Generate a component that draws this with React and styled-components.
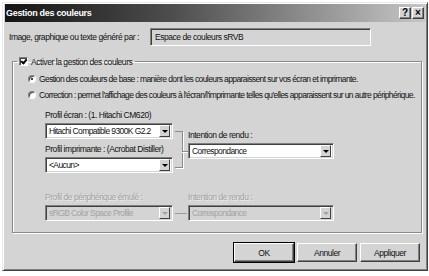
import React from "react";
import styled, { createGlobalStyle } from "styled-components";

const GlobalStyle = createGlobalStyle`
  html, body {
    margin: 0;
    padding: 0;
    background: #ffffff;
  }
  body {
    font-family: "Liberation Sans", Arial, sans-serif;
    font-size: 8.5px;
    letter-spacing: -0.45px;
    color: #111;
  }
`;

const FACE = "#d4d4d4";

const Window = styled.div`
  box-sizing: border-box;
  width: 426px;
  height: 269px;
  margin: 2px 0 0 2px;
  background: ${FACE};
  border: 1px solid;
  border-color: #e8e8e8 #404040 #404040 #e8e8e8;
  box-shadow: inset 1px 1px 0 #ffffff, inset -1px -1px 0 #808080;
  padding: 1px 2px;
  display: flex;
  flex-direction: column;
`;

const TitleBar = styled.div`
  height: 18px;
  flex: none;
  display: flex;
  align-items: center;
  justify-content: space-between;
  padding: 0 1px;
  background: linear-gradient(to right, #141414 0%, #4e4e4e 40%, #c6c6c6 100%);
  color: #ffffff;
  font-weight: bold;
  font-size: 9px;
  letter-spacing: -0.3px;
`;

const CaptionButtons = styled.div`
  display: flex;
  gap: 1px;
`;

const CaptionButton = styled.div`
  box-sizing: border-box;
  width: 12px;
  height: 12px;
  background: ${FACE};
  border: 1px solid;
  border-color: #ffffff #404040 #404040 #ffffff;
  box-shadow: inset -1px -1px 0 #808080;
  color: #000;
  font-weight: bold;
  font-size: 10px;
  line-height: 10px;
  text-align: center;
  letter-spacing: 0;
`;

const Content = styled.div`
  flex: 1;
  display: flex;
  flex-direction: column;
  padding-top: 6px;
`;

const SourceRow = styled.div`
  display: flex;
  align-items: center;
`;

const SourceLabel = styled.span`
  width: 141px;
  padding-left: 4px;
`;

const ReadOnlyField = styled.div`
  box-sizing: border-box;
  width: 221px;
  height: 18px;
  display: flex;
  align-items: center;
  padding-left: 4px;
  border: 1px solid;
  border-color: #808080 #ffffff #ffffff #808080;
  box-shadow: inset 1px 1px 0 #404040, inset -1px -1px 0 ${FACE};
`;

const Group = styled.fieldset`
  box-sizing: border-box;
  height: 177px;
  margin: 10px 6px 0 7px;
  padding: 0 6px 0 15px;
  border: 1px solid #8a8a8a;
  box-shadow: 1px 1px 0 #ffffff, inset 1px 1px 0 #ffffff;
  display: flex;
  flex-direction: column;
`;

const Legend = styled.legend`
  height: 11px;
  display: flex;
  align-items: center;
  gap: 3px;
  padding: 0 3px 0 2px;
  margin-left: -11px;
`;

const CheckBox = styled.span`
  box-sizing: border-box;
  width: 9px;
  height: 9px;
  background: #fff;
  border: 1px solid;
  border-color: #808080 #ffffff #ffffff #808080;
  box-shadow: inset 1px 1px 0 #404040;
  position: relative;
  &::after {
    content: "";
    position: absolute;
    left: 2px;
    top: 0;
    width: 2px;
    height: 4px;
    border: solid #000;
    border-width: 0 2px 2px 0;
    transform: rotate(40deg);
  }
`;

const RadioList = styled.div`
  display: flex;
  flex-direction: column;
  gap: 5px;
  margin-top: 6px;
`;

const RadioRow = styled.div`
  height: 11px;
  display: flex;
  align-items: center;
  gap: 3px;
  white-space: nowrap;
  letter-spacing: -0.6px;
`;

const Radio = styled.span`
  box-sizing: border-box;
  width: 8px;
  height: 8px;
  border-radius: 50%;
  background: #fff;
  border: 1px solid;
  border-color: #808080 #ffffff #ffffff #808080;
  box-shadow: inset 1px 1px 0 #404040;
  display: flex;
  align-items: center;
  justify-content: center;
  &::after {
    content: "";
    width: 2px;
    height: 2px;
    border-radius: 50%;
    background: ${(p) => (p.$checked ? "#000" : "transparent")};
  }
`;

const ProfileGrid = styled.div`
  display: grid;
  grid-template-columns: 128px 15px 146px;
  margin: ${(p) => p.$top}px 0 0 17px;
`;

const Column = styled.div`
  display: flex;
  flex-direction: column;
`;

const FieldLabel = styled.div`
  height: 11px;
  line-height: 11px;
  margin-bottom: 2px;
  white-space: nowrap;
  color: ${(p) => (p.$disabled ? "#a2a2a2" : "#111")};
  text-shadow: ${(p) => (p.$disabled ? "1px 1px 0 #ececec" : "none")};
`;

const SelectBox = styled.div`
  box-sizing: border-box;
  height: 16px;
  display: flex;
  align-items: center;
  background: ${(p) => (p.$disabled ? FACE : "#fff")};
  color: ${(p) => (p.$disabled ? "#a2a2a2" : "#111")};
  border: 1px solid;
  border-color: #808080 #ffffff #ffffff #808080;
  box-shadow: inset 1px 1px 0 #404040, inset -1px -1px 0 ${FACE};
  padding: 2px 2px 2px 3px;
  margin-bottom: ${(p) => p.$gap || 0}px;
`;

const SelectText = styled.span`
  flex: 1;
  white-space: nowrap;
  letter-spacing: -0.6px;
`;

const ArrowButton = styled.span`
  box-sizing: border-box;
  width: 11px;
  height: 12px;
  background: ${FACE};
  border: 1px solid;
  border-color: #ffffff #404040 #404040 #ffffff;
  display: flex;
  align-items: center;
  justify-content: center;
  &::after {
    content: "";
    border-style: solid;
    border-width: 3px 3px 0 3px;
    border-color: ${(p) => (p.$disabled ? "#a2a2a2" : "#000")} transparent transparent transparent;
  }
`;

const Bracket = styled.div`
  position: relative;
  margin: 21px 0 0 2px;
  height: 35px;
  width: 7px;
  border: 1px solid #8a8a8a;
  border-left: none;
  box-shadow: 1px 1px 0 #ffffff;
  &::after {
    content: "";
    position: absolute;
    left: 7px;
    top: 19px;
    width: 6px;
    border-top: 1px solid #8a8a8a;
    box-shadow: 0 1px 0 #ffffff;
  }
`;

const RightColumn = styled.div`
  display: flex;
  flex-direction: column;
  padding-top: 20px;
`;

const Link = styled.div`
  margin: 21px 1px 0 2px;
  border-top: 1px solid #9a9a9a;
`;

const ButtonRow = styled.div`
  display: flex;
  justify-content: flex-end;
  gap: 3px;
  margin: 10px 5px 0 0;
`;

const PushButton = styled.div`
  box-sizing: border-box;
  width: 60px;
  height: 19px;
  display: flex;
  align-items: center;
  justify-content: center;
  background: ${FACE};
  border: 1px solid;
  border-color: #ffffff #404040 #404040 #ffffff;
  box-shadow: inset -1px -1px 0 #808080;
  outline: ${(p) => (p.$default ? "1px solid #000" : "none")};
`;

const Select = ({ value, disabled, gap }) => (
  <SelectBox $disabled={disabled} $gap={gap}>
    <SelectText>{value}</SelectText>
    <ArrowButton $disabled={disabled} />
  </SelectBox>
);

export default function App() {
  return (
    <>
      <GlobalStyle />
      <Window>
        <TitleBar>
          <span>Gestion des couleurs</span>
          <CaptionButtons>
            <CaptionButton>?</CaptionButton>
            <CaptionButton>×</CaptionButton>
          </CaptionButtons>
        </TitleBar>
        <Content>
          <SourceRow>
            <SourceLabel>Image, graphique ou texte généré par :</SourceLabel>
            <ReadOnlyField>Espace de couleurs sRVB</ReadOnlyField>
          </SourceRow>
          <Group>
            <Legend>
              <CheckBox />
              <span>Activer la gestion des couleurs</span>
            </Legend>
            <RadioList>
              <RadioRow>
                <Radio $checked />
                <span>Gestion des couleurs de base : manière dont les couleurs apparaissent sur vos écran et imprimante.</span>
              </RadioRow>
              <RadioRow>
                <Radio />
                <span>Correction : permet l'affichage des couleurs à l'écran/l'imprimante telles qu'elles apparaissent sur un autre périphérique.</span>
              </RadioRow>
            </RadioList>
            <ProfileGrid $top={10}>
              <Column>
                <FieldLabel>Profil écran : (1. Hitachi CM620)</FieldLabel>
                <Select value="Hitachi Compatible 9300K G2.2" gap={5} />
                <FieldLabel>Profil imprimante : (Acrobat Distiller)</FieldLabel>
                <Select value="<Aucun>" />
              </Column>
              <Bracket />
              <RightColumn>
                <FieldLabel>Intention de rendu :</FieldLabel>
                <Select value="Correspondance" />
              </RightColumn>
            </ProfileGrid>
            <ProfileGrid $top={19}>
              <Column>
                <FieldLabel $disabled>Profil de périphérique émulé :</FieldLabel>
                <Select value="sRGB Color Space Profile" disabled />
              </Column>
              <Link />
              <Column>
                <FieldLabel $disabled>Intention de rendu :</FieldLabel>
                <Select value="Correspondance" disabled />
              </Column>
            </ProfileGrid>
          </Group>
          <ButtonRow>
            <PushButton $default>OK</PushButton>
            <PushButton>Annuler</PushButton>
            <PushButton>Appliquer</PushButton>
          </ButtonRow>
        </Content>
      </Window>
    </>
  );
}
